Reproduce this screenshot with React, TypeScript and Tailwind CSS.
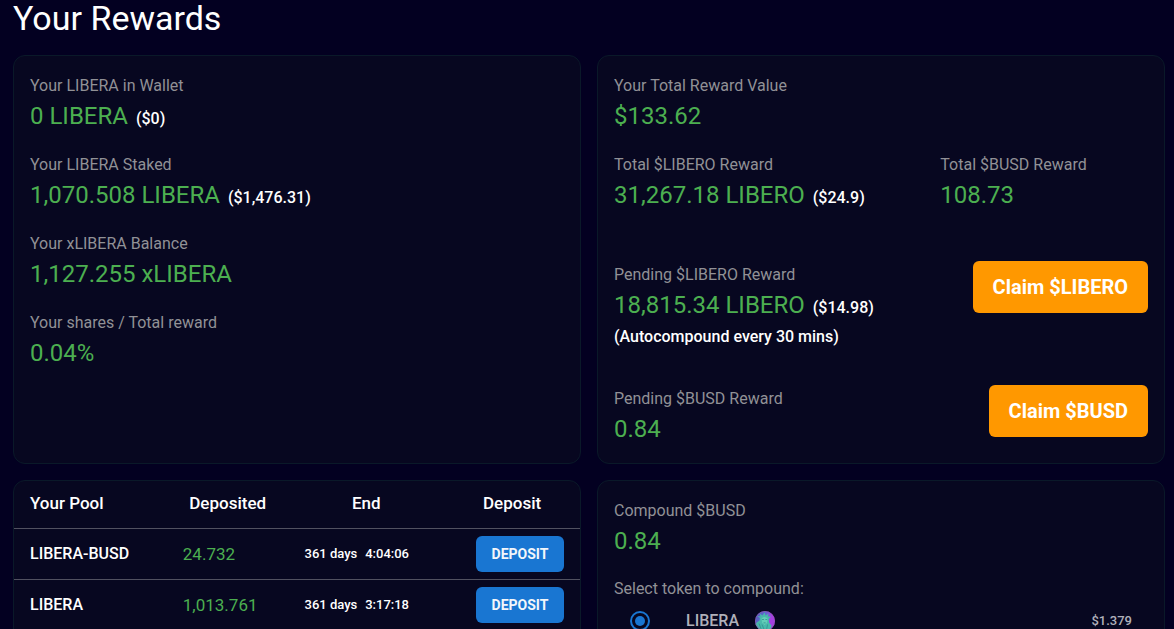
import type { ReactNode } from "react";

function Card({ children, className = "" }: { children: ReactNode; className?: string }) {
  return (
    <section className={`rounded-xl border border-[#0a1929] bg-[#070720] ${className}`}>{children}</section>
  );
}

function Stat({ label, value, note }: { label: string; value: string; note?: string }) {
  return (
    <div>
      <dt className="text-base leading-6 text-[#919196]">{label}</dt>
      <dd className="mt-0.5 flex items-baseline gap-2 text-2xl leading-8 text-[#4caf50]">
        {value}
        {note && <span className="text-base leading-6 font-medium text-white">{note}</span>}
      </dd>
    </div>
  );
}

function ClaimButton({ children }: { children: ReactNode }) {
  return (
    <button
      type="button"
      className="shrink-0 rounded-md bg-[#ff9800] px-5 py-2.5 text-xl leading-8 font-bold text-white"
    >
      {children}
    </button>
  );
}

const pools = [
  { name: "LIBERA-BUSD", deposited: "24.732", days: "361 days", time: "4:04:06" },
  { name: "LIBERA", deposited: "1,013.761", days: "361 days", time: "3:17:18" },
];

function PoolTable() {
  return (
    <table className="w-full table-fixed border-collapse text-white">
      <colgroup>
        <col className="w-[27%]" />
        <col className="w-[21.5%]" />
        <col className="w-[27.5%]" />
        <col className="w-[24%]" />
      </colgroup>
      <thead>
        <tr className="h-[47px] border-b border-[#515160] text-[17px] leading-6">
          <th scope="col" className="px-4 pb-0.5 text-left font-medium">Your Pool</th>
          <th scope="col" className="px-4 pb-0.5 text-center font-medium">Deposited</th>
          <th scope="col" className="px-4 pb-0.5 text-center font-medium">End</th>
          <th scope="col" className="px-4 pb-0.5 text-center font-medium">Deposit</th>
        </tr>
      </thead>
      <tbody>
        {pools.map((pool) => (
          <tr key={pool.name} className="h-[51px] border-b border-[#515160]">
            <td className="pl-4 text-base font-medium whitespace-nowrap">{pool.name}</td>
            <td className="pl-4 text-[17px] leading-6 text-[#4caf50]">{pool.deposited}</td>
            <td className="pl-4 text-[13px] font-medium whitespace-nowrap">
              <span className="mr-2">{pool.days}</span>
              <span>{pool.time}</span>
            </td>
            <td className="pr-4 text-right">
              <button
                type="button"
                className="h-9 w-[88px] rounded-md bg-[#1976d2] align-middle text-sm font-bold text-[#f2f6fb]"
              >
                DEPOSIT
              </button>
            </td>
          </tr>
        ))}
      </tbody>
    </table>
  );
}

function LibertyIcon() {
  return (
    <svg viewBox="0 0 20 20" className="size-5" aria-hidden="true">
      <defs>
        <linearGradient id="coin" x1="0" y1="0" x2="1" y2="0.4">
          <stop offset="0" stopColor="#5157b4" />
          <stop offset="0.5" stopColor="#5f68d0" />
          <stop offset="0.8" stopColor="#a43fe0" />
        </linearGradient>
        <clipPath id="disc">
          <circle cx="10" cy="10" r="10" />
        </clipPath>
      </defs>
      <g clipPath="url(#disc)">
        <rect width="20" height="20" fill="url(#coin)" />
        <path d="M0 20 0.5 12.5 4.5 9.5 5 7 2 5 5.5 5.6 4.5 2.5 7.5 4.6 9.5 1.5 10.7 4.4 13.5 2.5 13 5.6 16 5.5 13.8 8 14 11.5 16.5 14.5 15.5 20Z" fill="#48b9ab" />
        <path d="M6.5 7.5Q9.6 4.5 12.7 7.5L12 12 9.6 14 7.2 12Z" fill="#62ceb8" />
        <path d="M7 8.5h2M10.4 8.5h1.8M8.5 11.9h2.2M4 12.5 6.5 19M7 13.5 9.3 19M12.5 13.5 11.5 19" stroke="#338e90" strokeWidth="0.8" fill="none" />
      </g>
      <circle cx="10" cy="10" r="9.6" fill="none" stroke="#9a55b5" strokeWidth="0.6" />
    </svg>
  );
}

export default function App() {
  return (
    <main className="h-screen overflow-hidden bg-[#030021] pr-[9px] pl-[13px] font-['Roboto',sans-serif]">
      <h1 className="pb-[19px] text-[34px] leading-9 text-white">Your Rewards</h1>
      <div className="grid grid-cols-2 gap-4">
        <Card className="px-4 pt-[18px] pb-6">
          <dl className="flex flex-col gap-[21px]">
            <Stat label="Your LIBERA in Wallet" value="0 LIBERA" note="($0)" />
            <Stat label="Your LIBERA Staked" value="1,070.508 LIBERA" note="($1,476.31)" />
            <Stat label="Your xLIBERA Balance" value="1,127.255 xLIBERA" />
            <Stat label="Your shares / Total reward" value="0.04%" />
          </dl>
        </Card>

        <Card className="px-4 py-[18px]">
          <dl className="flex flex-col gap-[21px]">
            <Stat label="Your Total Reward Value" value="$133.62" />
            <div className="grid grid-cols-[11fr_7fr]">
              <Stat label="Total $LIBERO Reward" value="31,267.18 LIBERO" note="($24.9)" />
              <Stat label="Total $BUSD Reward" value="108.73" />
            </div>
          </dl>
          <div className="mt-[50px] flex items-start justify-between">
            <div className="pt-0.5">
              <dl>
                <Stat label="Pending $LIBERO Reward" value="18,815.34 LIBERO" note="($14.98)" />
              </dl>
              <p className="mt-1 text-base leading-6 font-medium text-white">(Autocompound every 30 mins)</p>
            </div>
            <ClaimButton>Claim $LIBERO</ClaimButton>
          </div>
          <div className="mt-9 flex items-start justify-between">
            <dl className="pt-0.5">
              <Stat label="Pending $BUSD Reward" value="0.84" />
            </dl>
            <ClaimButton>Claim $BUSD</ClaimButton>
          </div>
        </Card>

        <Card>
          <PoolTable />
        </Card>

        <Card className="px-4 py-[18px]">
          <dl>
            <Stat label="Compound $BUSD" value="0.84" />
          </dl>
          <fieldset className="mt-5">
            <legend className="text-base leading-6 text-[#919196]">Select token to compound:</legend>
            <label className="flex items-center px-4 pt-2 text-base leading-6 font-medium text-[#b0b0ba]">
              <input
                type="radio"
                name="token"
                defaultChecked
                className="mr-9 size-5 appearance-none rounded-full border-2 border-[#1976d2] p-[3px] checked:bg-[#1976d2] checked:bg-clip-content"
              />
              <span className="mr-4">LIBERA</span>
              <LibertyIcon />
              <span className="ml-auto text-[13px]">$1.379</span>
            </label>
          </fieldset>
        </Card>
      </div>
    </main>
  );
}
